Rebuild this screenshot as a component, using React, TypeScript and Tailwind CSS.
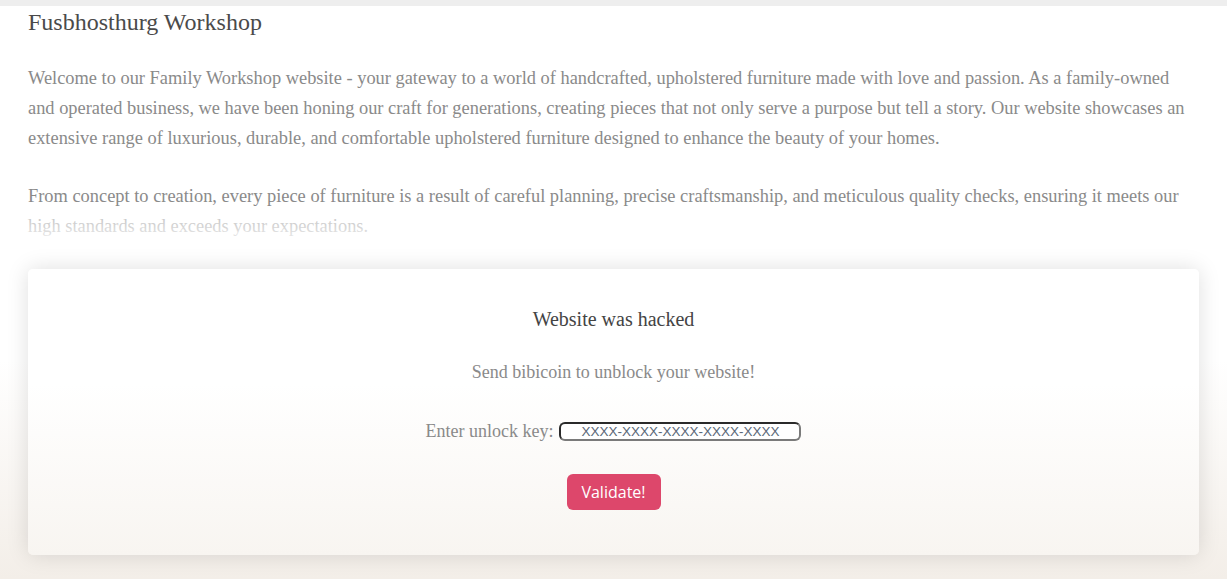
export default function App() {
  return (
    <div
      className="min-h-[579px] w-full bg-[linear-gradient(to_bottom,#ffffff_0px,#ffffff_360px,#f3eee8_579px)] text-[#8a8a8a]"
      style={{ fontFamily: '"Liberation Serif", "Times New Roman", serif' }}
    >
      <div className="h-[6px] bg-[#eeeeee]" />

      <div className="px-[28px]">
        <h1 className="mt-[2px] text-[24px] leading-[28px] text-[#4a4a4a]">Fusbhosthurg Workshop</h1>

        {/* intro text, fades out at the bottom */}
        <div className="relative mt-[27px]">
          <p className="text-[18.4px] leading-[30px]">
            Welcome to our Family Workshop website - your gateway to a world of handcrafted, upholstered furniture made with love and passion. As a family-owned and operated business, we have been honing our craft for generations, creating pieces that not only serve a purpose but tell a story. Our website showcases an extensive range of luxurious, durable, and comfortable upholstered furniture designed to enhance the beauty of your homes.
          </p>
          <p className="mt-[28px] text-[18.4px] leading-[30px]">
            From concept to creation, every piece of furniture is a result of careful planning, precise craftsmanship, and meticulous quality checks, ensuring it meets our high standards and exceeds your expectations.
          </p>
          <div className="pointer-events-none absolute bottom-0 left-0 right-0 h-[32px] bg-gradient-to-b from-white/40 to-white/85" />
        </div>

        {/* ransom card */}
        <div className="mt-[28px] rounded-[5px] bg-[linear-gradient(to_bottom,#ffffff_0%,#ffffff_40%,#f8f5f1_100%)] px-6 pb-[45px] pt-[37px] text-center shadow-[0_0_22px_rgba(0,0,0,0.13)]">
          <h2 className="text-[20px] leading-[26px] text-[#444444]">Website was hacked</h2>
          <p className="mt-[28px] text-[18px] leading-[24px] text-[#8a8a8a]">Send bibicoin to unblock your website!</p>
          <div className="mt-[35px] flex items-center justify-center gap-[6px] text-[18px] leading-[24px] text-[#8a8a8a]">
            <span>Enter unlock key:</span>
            <input
              type="text"
              placeholder="XXXX-XXXX-XXXX-XXXX-XXXX"
              className="h-[19px] w-[242px] rounded-[6px] border-2 border-b-[#7a7a7a] border-l-[#2a2a2a] border-r-[#7a7a7a] border-t-[#2a2a2a] bg-white text-center text-[13.5px] leading-[15px] text-[#5a6878] outline-none placeholder:text-[#5a6878]"
              style={{ fontFamily: '"Liberation Sans", Arial, sans-serif' }}
            />
          </div>
          <div className="mt-[31px] flex justify-center">
            <button
              className="h-[36px] w-[94px] rounded-[6px] bg-[#dd476b] text-[16px] text-white"
              style={{ fontFamily: '"Open Sans", Lato, sans-serif' }}
            >
              Validate!
            </button>
          </div>
        </div>
      </div>
    </div>
  );
}
